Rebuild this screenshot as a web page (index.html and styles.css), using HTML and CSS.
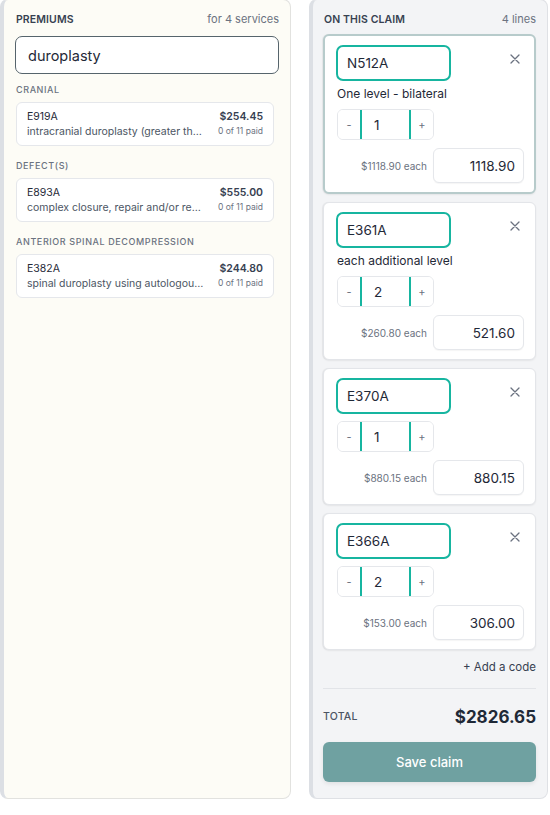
FILE: index.html
```html
<!DOCTYPE html>
<html lang="en">
<head>
<meta charset="utf-8">
<title>Claim</title>
<link rel="stylesheet" href="styles.css">
</head>
<body>
<div class="page">
  <section class="panel panel-left">
    <div class="panel-head">
      <span class="panel-title">PREMIUMS</span>
      <span class="panel-meta">for 4 services</span>
    </div>
    <input class="search" type="text" value="duroplasty">
    <div class="results">
      <div class="group">
        <div class="group-label">CRANIAL</div>
        <div class="result">
          <div class="r-row"><span class="r-code">E919A</span><span class="r-price">$254.45</span></div>
          <div class="r-row"><span class="r-desc">intracranial duroplasty (greater th…</span><span class="r-paid">0 of 11 paid</span></div>
        </div>
      </div>
      <div class="group">
        <div class="group-label">DEFECT(S)</div>
        <div class="result">
          <div class="r-row"><span class="r-code">E893A</span><span class="r-price">$555.00</span></div>
          <div class="r-row"><span class="r-desc">complex closure, repair and/or re…</span><span class="r-paid">0 of 11 paid</span></div>
        </div>
      </div>
      <div class="group">
        <div class="group-label">ANTERIOR SPINAL DECOMPRESSION</div>
        <div class="result">
          <div class="r-row"><span class="r-code">E382A</span><span class="r-price">$244.80</span></div>
          <div class="r-row"><span class="r-desc">spinal duroplasty using autologou…</span><span class="r-paid">0 of 11 paid</span></div>
        </div>
      </div>
    </div>
  </section>

  <section class="panel panel-right">
    <div class="panel-head">
      <span class="panel-title">ON THIS CLAIM</span>
      <span class="panel-meta">4 lines</span>
    </div>
    <div class="lines">
      <div class="line line-selected">
        <div class="line-top">
          <input class="code" type="text" value="N512A">
          <button class="remove" type="button" aria-label="Remove"><svg viewBox="0 0 10 10" width="10" height="10"><path d="M1 1 L9 9 M9 1 L1 9" stroke="currentColor" stroke-width="1.3" stroke-linecap="round" fill="none"/></svg></button>
        </div>
        <div class="line-desc">One level - bilateral</div>
        <div class="stepper"><button class="step" type="button">-</button><input class="qty" type="text" value="1"><button class="step" type="button">+</button></div>
        <div class="price-row"><span class="each">$1118.90 each</span><input class="amount" type="text" value="1118.90"></div>
      </div>
      <div class="line">
        <div class="line-top">
          <input class="code" type="text" value="E361A">
          <button class="remove" type="button" aria-label="Remove"><svg viewBox="0 0 10 10" width="10" height="10"><path d="M1 1 L9 9 M9 1 L1 9" stroke="currentColor" stroke-width="1.3" stroke-linecap="round" fill="none"/></svg></button>
        </div>
        <div class="line-desc">each additional level</div>
        <div class="stepper"><button class="step" type="button">-</button><input class="qty" type="text" value="2"><button class="step" type="button">+</button></div>
        <div class="price-row"><span class="each">$260.80 each</span><input class="amount" type="text" value="521.60"></div>
      </div>
      <div class="line">
        <div class="line-top">
          <input class="code" type="text" value="E370A">
          <button class="remove" type="button" aria-label="Remove"><svg viewBox="0 0 10 10" width="10" height="10"><path d="M1 1 L9 9 M9 1 L1 9" stroke="currentColor" stroke-width="1.3" stroke-linecap="round" fill="none"/></svg></button>
        </div>
        <div class="stepper"><button class="step" type="button">-</button><input class="qty" type="text" value="1"><button class="step" type="button">+</button></div>
        <div class="price-row"><span class="each">$880.15 each</span><input class="amount" type="text" value="880.15"></div>
      </div>
      <div class="line">
        <div class="line-top">
          <input class="code" type="text" value="E366A">
          <button class="remove" type="button" aria-label="Remove"><svg viewBox="0 0 10 10" width="10" height="10"><path d="M1 1 L9 9 M9 1 L1 9" stroke="currentColor" stroke-width="1.3" stroke-linecap="round" fill="none"/></svg></button>
        </div>
        <div class="stepper"><button class="step" type="button">-</button><input class="qty" type="text" value="2"><button class="step" type="button">+</button></div>
        <div class="price-row"><span class="each">$153.00 each</span><input class="amount" type="text" value="306.00"></div>
      </div>
    </div>
    <div class="add-code">+ Add a code</div>
    <div class="total-row">
      <span class="total-label">TOTAL</span>
      <span class="total-value">$2826.65</span>
    </div>
    <button class="save" type="button">Save claim</button>
  </section>
</div>
</body>
</html>
```

FILE: styles.css
```css
* { box-sizing: border-box; }

html, body {
  margin: 0;
  padding: 0;
  background: #ffffff;
}

body {
  font-family: Inter, "Noto Sans", "Liberation Sans", sans-serif;
  color: #1f2937;
  overflow: hidden;
}

.page {
  display: grid;
  grid-template-columns: 291px 239px;
  column-gap: 18px;
  margin-top: -1px;
  padding-bottom: 16px;
  border-bottom: 1px solid #e3e5e9;
  width: 550px;
}

.panel {
  display: flex;
  flex-direction: column;
  border: 1px solid #dfe1e5;
  border-left: 4px solid #dcdfe4;
  border-radius: 8px;
  padding: 11px 11px 16px 11px;
}

.panel-left {
  background: #fdfcf6;
  border-color: #e2e2df;
  border-left-color: #dcdfe4;
}

.panel-right {
  background: #f3f4f6;
  padding-left: 10px;
}

.panel-head {
  display: flex;
  justify-content: space-between;
  align-items: center;
  height: 16px;
  padding-left: 1px;
}

.panel-title {
  font-size: 10.5px;
  font-weight: 600;
  color: #374151;
  letter-spacing: 0.1px;
}

.panel-meta {
  font-size: 11px;
  color: #6b7280;
}

.search {
  display: block;
  margin-top: 9px;
  width: 100%;
  height: 38px;
  border: 1.5px solid #56646c;
  border-radius: 7px;
  background: #ffffff;
  padding: 0 12px;
  font: inherit;
  font-size: 14.5px;
  color: #1f2937;
  outline: none;
}

.results {
  padding: 0 5px 0 1px;
}

.group {
  margin-top: 9px;
}

.group + .group {
  margin-top: 13px;
}

.group-label {
  font-size: 9px;
  font-weight: 500;
  letter-spacing: 0.6px;
  color: #6b7280;
  line-height: 13px;
}

.result {
  margin-top: 6px;
  background: #ffffff;
  border: 1px solid #e5e7eb;
  border-radius: 6px;
  padding: 6px 10px 6px 10px;
}

.r-row {
  display: flex;
  justify-content: space-between;
  align-items: center;
  line-height: 15px;
  gap: 6px;
}

.r-code {
  font-size: 10.5px;
  color: #1f2937;
}

.r-price {
  font-size: 10.5px;
  font-weight: 600;
  color: #374151;
}

.r-desc {
  flex: 1;
  min-width: 0;
  font-size: 10.5px;
  color: #4b5563;
  white-space: nowrap;
}

.r-paid {
  flex: none;
  font-size: 8.5px;
  color: #6b7280;
}

.lines {
  display: flex;
  flex-direction: column;
  gap: 8px;
  margin-top: 7px;
}

.line {
  background: #ffffff;
  border: 1px solid #e3e5e9;
  border-radius: 6px;
  padding: 9px 10px 9px 12px;
  box-shadow: 0 1px 2px rgba(0, 0, 0, 0.06), -1px 0 1px rgba(0, 0, 0, 0.05);
}

.line-selected {
  border: 2px solid #b7cbcb;
  padding: 9px 9px 9px 11px;
}

.line-top {
  display: flex;
  justify-content: space-between;
  align-items: flex-start;
}

.code {
  width: 115px;
  height: 36px;
  border: 2px solid #17b5a0;
  border-radius: 7px;
  padding: 0 9px;
  font: inherit;
  font-size: 13.5px;
  color: #1f2937;
  background: #ffffff;
  outline: none;
}

.remove {
  border: none;
  background: none;
  padding: 0;
  margin: 8px 4px 0 0;
  width: 12px;
  height: 12px;
  display: flex;
  align-items: center;
  justify-content: center;
  color: #6b7280;
}

.line-desc {
  margin-top: 4px;
  font-size: 12px;
  line-height: 17px;
  color: #1f2937;
  padding-left: 1px;
}

.stepper {
  margin-top: 7px;
  margin-left: 1px;
  display: flex;
  width: 97px;
  height: 31px;
  border: 1px solid #e5e7eb;
  border-radius: 6px;
  background: #ffffff;
  overflow: hidden;
}

.step {
  width: 22px;
  border: none;
  background: #ffffff;
  padding: 0;
  font: inherit;
  font-size: 11px;
  color: #6b7280;
}

.qty {
  width: 51px;
  border: none;
  border-left: 2px solid #17b5a0;
  border-right: 2px solid #17b5a0;
  padding: 0 0 0 12px;
  font: inherit;
  font-size: 13.5px;
  color: #1f2937;
  background: #ffffff;
  outline: none;
}

.price-row {
  margin-top: 8px;
  display: flex;
  justify-content: flex-end;
  align-items: center;
  gap: 6px;
  padding-right: 1px;
}

.each {
  font-size: 10px;
  color: #6b7280;
}

.amount {
  width: 91px;
  height: 35px;
  border: 1px solid #e5e7eb;
  border-radius: 6px;
  padding: 0 8px;
  text-align: right;
  font: inherit;
  font-size: 13.5px;
  color: #1f2937;
  background: #ffffff;
  outline: none;
  box-shadow: 0 1px 1px rgba(0, 0, 0, 0.04);
}

.add-code {
  margin-top: 9px;
  text-align: right;
  font-size: 11.5px;
  line-height: 16px;
  color: #374151;
}

.total-row {
  margin-top: 13px;
  border-top: 1px solid #e2e4e8;
  padding-top: 15px;
  display: flex;
  justify-content: space-between;
  align-items: center;
  height: 41px;
}

.total-label {
  font-size: 10.5px;
  font-weight: 500;
  color: #4b5563;
  letter-spacing: 0.2px;
}

.total-value {
  font-size: 17px;
  font-weight: 700;
  color: #1f2937;
}

.save {
  margin-top: 13px;
  height: 40px;
  width: 100%;
  border: none;
  border-radius: 6px;
  background: #6fa1a1;
  color: #ffffff;
  font: inherit;
  font-size: 13px;
  font-weight: 500;
  box-shadow: 0 2px 4px rgba(0, 0, 0, 0.08);
}
```
